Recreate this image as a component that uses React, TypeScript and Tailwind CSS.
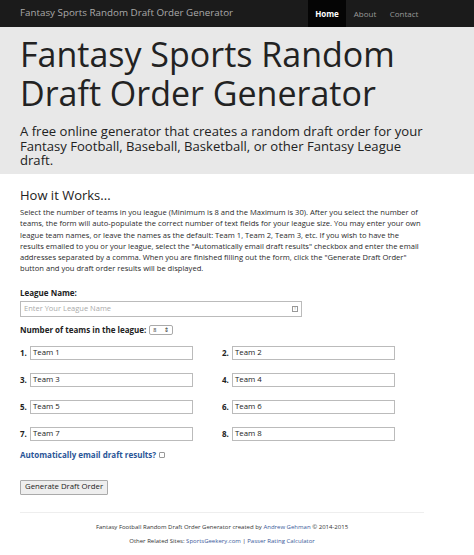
import React from "react";

const teams = [1, 2, 3, 4, 5, 6, 7, 8];

export default function App() {
  return (
    <div className="min-h-[555px] bg-white text-[#333]" style={{ fontFamily: '"Open Sans", "Noto Sans", sans-serif' }}>
      <div className="h-[27px] bg-[#1b1b1b] flex items-stretch">
        <div className="w-[404px] ml-[20px] flex items-center justify-between">
          <span className="text-[9.8px] text-[#aaa]">Fantasy Sports Random Draft Order Generator</span>
          <div className="flex h-full text-[8px]">
            <span className="bg-[#050505] text-white font-bold w-[38px] flex items-center justify-center">Home</span>
            <span className="text-[#999] w-[38px] flex items-center justify-center">About</span>
            <span className="text-[#999] w-[40px] flex items-center justify-center">Contact</span>
          </div>
        </div>
      </div>
      <div className="bg-[#e8e8e8] h-[147px] pt-[8px]">
        <div className="ml-[20px] w-[410px]">
          <h1 className="text-[34px] leading-[39px] text-[#222]">Fantasy Sports Random Draft Order Generator</h1>
          <p className="mt-[11px] text-[13.1px] leading-[14.5px] text-[#222]">A free online generator that creates a random draft order for your Fantasy Football, Baseball, Basketball, or other Fantasy League draft.</p>
        </div>
      </div>
      <div className="ml-[20px] w-[404px]">
        <h2 className="mt-[12px] text-[13px] leading-[18px] text-[#222]">How it Works...</h2>
        <p className="mt-[3px] text-[7.6px] leading-[11.3px] text-[#2a2a2a]">Select the number of teams in you league (Minimum is 8 and the Maximum is 30). After you select the number of teams, the form will auto-populate the correct number of text fields for your league size. You may enter your own league team names, or leave the names as the default: Team 1, Team 2, Team 3, etc. If you wish to have the results emailed to you or your league, select the "Automatically email draft results" checkbox and enter the email addresses separated by a comma. When you are finished filling out the form, click the "Generate Draft Order" button and you draft order results will be displayed.</p>
        <div className="mt-[12px] text-[8px] font-bold text-[#222]">League Name:</div>
        <div className="mt-[2px] w-[282px] h-[16px] border border-[#bbb] bg-white flex items-center px-[3px] text-[7.5px] text-[#aaa] justify-between">
          <span>Enter Your League Name</span>
          <span className="w-[6px] h-[6px] border border-[#999] text-[4px] leading-none flex items-center justify-center text-[#666]">!</span>
        </div>
        <div className="mt-[7px] flex items-center text-[8px] font-bold text-[#222]">
          <span>Number of teams in the league:</span>
          <span className="ml-[3px] w-[24px] h-[10px] border border-[#aaa] rounded-[2px] bg-white text-[5.5px] font-normal flex items-center justify-between px-[3px]">
            <span>8</span><span>⇕</span>
          </span>
        </div>
        <div className="mt-[10px] grid grid-cols-[202px_202px] gap-y-[13px]">
          {teams.map((t) => (
            <div key={t} className="flex items-center">
              <span className="w-[10px] text-[8px] font-bold text-[#222]">{t}.</span>
              <div className="w-[163px] h-[14px] border border-[#bbb] bg-white px-[2px] flex items-center text-[7.8px] text-[#222]">Team {t}</div>
            </div>
          ))}
        </div>
        <div className="mt-[8px] flex items-center text-[8px] font-bold text-[#2a5597]">
          <span>Automatically email draft results?</span>
          <span className="ml-[3px] w-[6px] h-[6px] border border-[#999] rounded-[1px] bg-white"></span>
        </div>
        <div className="mt-[19px] inline-flex items-center h-[15px] px-[4px] border border-[#aaa] bg-[#eee] rounded-[1px] text-[7.8px] text-[#222]">Generate Draft Order</div>
        <div className="mt-[17px] border-t border-[#eee]"></div>
        <div className="mt-[10px] text-center text-[6px] leading-[8px] text-[#333]">Fantasy Football Random Draft Order Generator created by <span className="text-[#3a5a9a]">Andrew Gehman</span> © 2014-2015</div>
        <div className="mt-[6px] text-center text-[6px] leading-[8px] text-[#333]">Other Related Sites: <span className="text-[#3a5a9a]">SportsGeekery.com</span> | <span className="text-[#3a5a9a]">Passer Rating Calculator</span></div>
      </div>
    </div>
  );
}
